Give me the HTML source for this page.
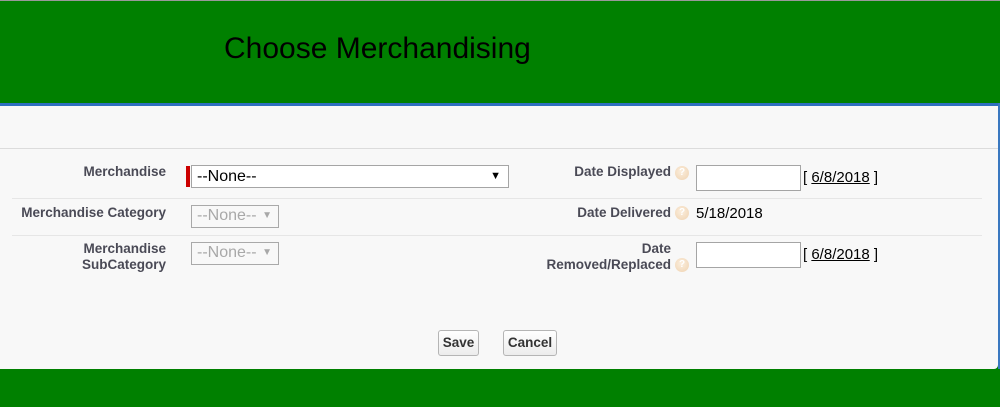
<!DOCTYPE html>
<html><head><style>
*{margin:0;padding:0;box-sizing:border-box}
body{width:1000px;height:407px;position:relative;overflow:hidden;background:#008000;font-family:"Liberation Sans",Arial,sans-serif}
.a{position:absolute}
.lbl{font-size:13.5px;font-weight:bold;color:#4a4a56;text-align:right;line-height:16px}
.help{width:14px;height:14px;border-radius:50%;background:radial-gradient(circle at 45% 40%,#fbeedd,#efd2b0);color:#fff;font-size:10px;font-weight:bold;text-align:center;line-height:14px}
.inp{background:#fff;border:1px solid #a5a5a5}
.dis{border:1px solid #a9a9a9;background:#f8f8f8;color:#a8a8a8;font-size:16px;line-height:20px;padding-left:5px}
.btn{border:1px solid #b5b5b5;border-radius:3px;background:linear-gradient(#fff,#ececec);font-size:13.5px;font-weight:bold;color:#333;text-align:center;line-height:24px;height:26px}
.sep{height:1px;background:#e6e6e6;left:12px;width:970px}
.txt{font-size:15px;color:#000}
</style></head><body>
<div class="a" style="left:0;top:0;width:1000px;height:1px;background:#999"></div>
<div class="a" style="left:224px;top:32px;font-size:30px;color:#000">Choose Merchandising</div>
<div class="a" style="left:0;top:103px;width:999px;height:3px;background:#2f6fbf"></div>
<div class="a" style="left:0;top:106px;width:998px;height:263px;background:#f8f8f8;border-bottom-right-radius:4px"></div>
<div class="a" style="left:998px;top:103px;width:2px;height:266px;background:#3a78c0"></div>
<div class="a" style="left:0;top:148px;width:998px;height:1px;background:#dcdcdc"></div>
<div class="a sep" style="top:198px"></div>
<div class="a sep" style="top:235px"></div>

<div class="a lbl" style="left:0;width:166px;top:164px">Merchandise</div>
<div class="a" style="left:186px;top:166px;width:4px;height:21px;background:#c00"></div>
<div class="a inp" style="left:191px;top:165px;width:318px;height:23px;font-size:16px;line-height:21px;padding-left:5px">--None--<span style="position:absolute;right:7px;top:0;font-size:11px">▼</span></div>

<div class="a lbl" style="left:0;width:166px;top:205px">Merchandise Category</div>
<div class="a dis" style="left:191px;top:205px;width:88px;height:23px">--None--<span style="position:absolute;right:6px;top:0;font-size:10px">▼</span></div>

<div class="a lbl" style="left:0;width:166px;top:241px">Merchandise<br>SubCategory</div>
<div class="a dis" style="left:191px;top:242px;width:88px;height:23px">--None--<span style="position:absolute;right:6px;top:0;font-size:10px">▼</span></div>

<div class="a lbl" style="left:500px;width:171px;top:164px">Date Displayed</div>
<div class="a help" style="left:675px;top:166px">?</div>
<div class="a inp" style="left:696px;top:165px;width:105px;height:26px"></div>
<div class="a txt" style="left:803px;top:169px">[ <u>6/8/2018</u> ]</div>

<div class="a lbl" style="left:500px;width:171px;top:205px">Date Delivered</div>
<div class="a help" style="left:675px;top:206px">?</div>
<div class="a txt" style="left:696px;top:205px">5/18/2018</div>

<div class="a lbl" style="left:500px;width:171px;top:241px">Date<br>Removed/Replaced</div>
<div class="a help" style="left:675px;top:258px">?</div>
<div class="a inp" style="left:696px;top:242px;width:105px;height:26px"></div>
<div class="a txt" style="left:803px;top:246px">[ <u>6/8/2018</u> ]</div>

<div class="a btn" style="left:438px;top:330px;width:41px">Save</div>
<div class="a btn" style="left:503px;top:330px;width:54px">Cancel</div>
</body></html>
